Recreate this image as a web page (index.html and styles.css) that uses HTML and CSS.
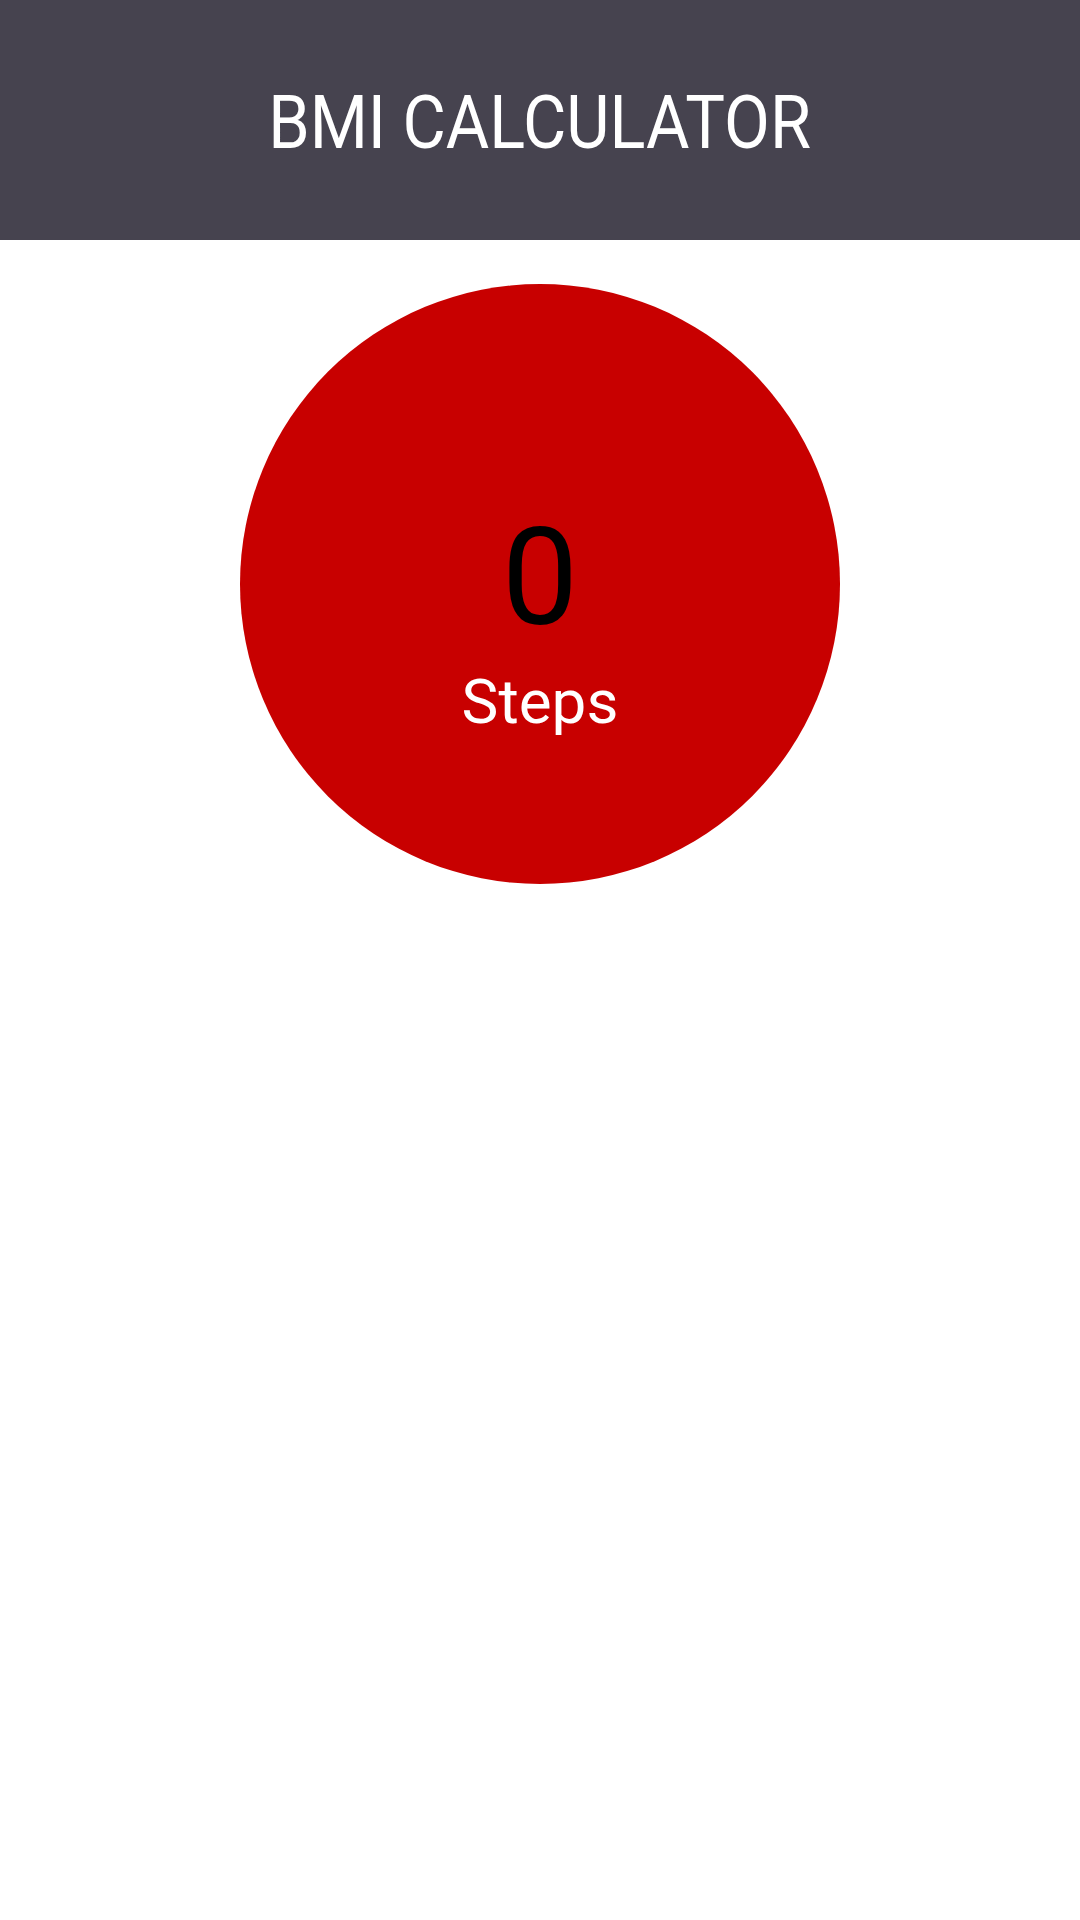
FILE: index.html
```html
<!DOCTYPE html>
<html lang="en">
<head>
	<meta charset="UTF-8">
	<title>BMI Calculator</title>
	<link rel="stylesheet" href="styles.css">
</head>
<body>
	<div class="toolbar">
		<p class="title">BMI CALCULATOR</p>
	</div>
	<div class="content">
		<div class="circle">
			<p class="count">0</p>
			<p class="label">Steps</p>
		</div>
	</div>
</body>
</html>
```
FILE: styles.css
```css
* {
	margin: 0;
	padding: 0;
}
body {
	width: 1080px;
	height: 1920px;
	background: #fff;
	font-family: Roboto, "Noto Sans", sans-serif;
}
.toolbar {
	height: 240px;
	background: #46434f;
	display: flex;
	justify-content: center;
	padding-top: 86px;
	box-sizing: border-box;
}
.title {
	color: #fff;
	font-size: 74px;
	line-height: 74px;
	height: 74px;
	transform: scaleX(0.9);
}
.content {
	display: flex;
	justify-content: center;
	padding-top: 44px;
}
.circle {
	width: 600px;
	height: 600px;
	border-radius: 50%;
	background: #c80000;
	display: flex;
	flex-direction: column;
	align-items: center;
	padding-top: 226px;
	box-sizing: border-box;
}
.count {
	color: #000;
	font-size: 136px;
	line-height: 136px;
}
.label {
	color: #fff;
	font-size: 62px;
	line-height: 62px;
	margin-top: 25px;
}
```
